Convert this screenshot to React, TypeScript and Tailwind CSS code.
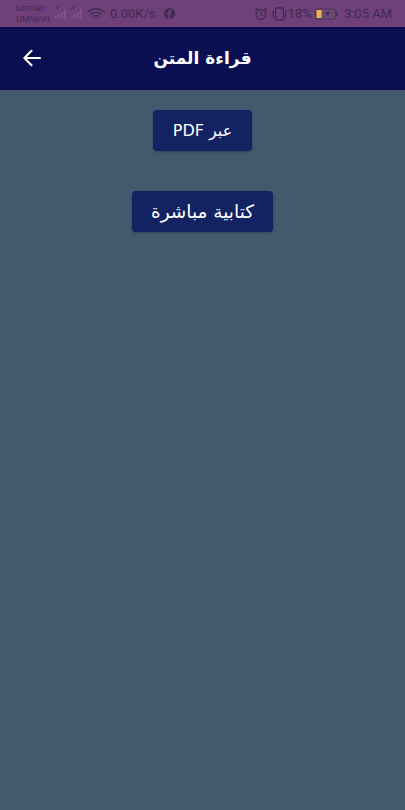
import React from "react";

function Wifi() {
  return (
    <svg width="18" height="14" viewBox="0 0 18 14" fill="none" stroke="#3f2b52" strokeWidth="1.4" strokeLinecap="round">
      <path d="M1 4.500C5.500 .8 12.500 .8 17 4.500" />
      <path d="M3.500 7.200C6.500 4.800 11.500 4.800 14.500 7.200" />
      <path d="M6 9.800C7.800 8.500 10.200 8.500 12 9.800" />
      <circle cx="9" cy="12" r="1" fill="#3f2b52" stroke="none" />
    </svg>
  );
}

function Signal() {
  return (
    <svg width="13" height="10" viewBox="0 0 13 10" fill="#7b5486">
      <rect x="0" y="7" width="2" height="3" />
      <rect x="3" y="5" width="2" height="5" />
      <rect x="6" y="3" width="2" height="7" />
      <rect x="9" y="0" width="2" height="10" />
    </svg>
  );
}

function Alarm() {
  return (
    <svg width="14" height="14" viewBox="0 0 14 14" fill="none" stroke="#3f2b52" strokeWidth="1.3" strokeLinecap="round">
      <circle cx="7" cy="7.500" r="4.800" />
      <path d="M7 5v2.700l1.800 1M1.200 3.400 3.400 1.400M12.800 3.400l-2.200-2" />
    </svg>
  );
}

function Vibrate() {
  return (
    <svg width="17" height="14" viewBox="0 0 17 14" fill="none" stroke="#3f2b52" strokeWidth="1.3" strokeLinecap="round">
      <rect x="4.500" y="1" width="8" height="12" rx="1" />
      <path d="M2.200 4v6M14.800 4v6" />
    </svg>
  );
}

function Battery() {
  return (
    <svg width="24" height="12" viewBox="0 0 24 12">
      <rect x=".5" y="1" width="20" height="10" rx="1.500" fill="#6a4a70" stroke="#4a3358" />
      <rect x="1.500" y="2" width="5" height="8" fill="#f0b24a" />
      <rect x="21" y="4" width="2" height="4" fill="#4a3358" />
      <path d="M10 4h5l-2.500 4z" fill="#3f2b52" />
    </svg>
  );
}

function Facebook() {
  return (
    <svg width="11" height="11" viewBox="0 0 11 11">
      <circle cx="5.500" cy="5.500" r="5.500" fill="#3f2b52" />
      <path d="M6 11V6.500h1.500l.2-1.700H6V3.900c0-.5.2-.8.8-.8h.9V1.600C7.400 1.500 7 1.500 6.500 1.500 5.200 1.500 4.400 2.300 4.400 3.700v1.100H3v1.700h1.400V11z" fill="#6f4079" />
    </svg>
  );
}

function Back() {
  return (
    <svg width="18" height="18" viewBox="0 0 20 20" fill="none" stroke="white" strokeWidth="2.300" strokeLinecap="round" strokeLinejoin="round">
      <path d="M19 10H2M9.500 2 1.500 10l8 8" />
    </svg>
  );
}

export default function App() {
  return (
    <div className="flex h-[810px] w-[405px] flex-col overflow-hidden bg-[#435a6e] font-['DejaVu_Sans','Noto_Sans',sans-serif]">
      <div className="flex h-[27px] shrink-0 items-center justify-between bg-[#6f4079] pl-4 pr-[13px] text-[#3f2b52]">
        <div className="flex items-center">
          <div className="relative flex w-[71px] flex-col font-['Liberation_Sans',sans-serif] text-[8.500px] leading-[11px]">
            <span>Umniah</span>
            <span>UMNIAH</span>
            <span className="absolute left-[38px] top-[1px] text-[8px] leading-none">×</span>
            <span className="absolute left-[54px] top-[1px] text-[8px] leading-none">×</span>
            <span className="absolute left-[39px] top-[6px]"><Signal /></span>
            <span className="absolute left-[55px] top-[6px]"><Signal /></span>
          </div>
          <Wifi />
          <span className="ml-[5px] font-['Roboto',sans-serif] text-[13px]">0.00K/s</span>
          <span className="ml-2"><Facebook /></span>
        </div>
        <div className="flex items-center font-['Roboto',sans-serif] text-[13px]">
          <Alarm />
          <span className="ml-[3px]"><Vibrate /></span>
          <span>18%</span>
          <span className="ml-[3px]"><Battery /></span>
          <span className="ml-[5px]">3:05 AM</span>
        </div>
      </div>

      <header className="relative flex h-[63px] shrink-0 items-center justify-center bg-[#0a0f52]">
        <span className="absolute left-[23px] top-[22px]"><Back /></span>
        <h1 dir="rtl" className="text-[17px] font-bold text-white">قراءة المتن</h1>
      </header>

      <main className="flex flex-col items-center gap-[40px] pt-5">
        <button dir="rtl" className="flex h-[41px] w-[99px] items-center justify-center rounded-[4px] bg-[#122262] text-[16px] text-white shadow-[0_1px_3px_rgba(0,0,0,0.25)]">
          عبر PDF
        </button>
        <button dir="rtl" className="flex h-[41px] w-[141px] items-center justify-center rounded-[4px] bg-[#122262] text-[18.500px] text-white shadow-[0_1px_3px_rgba(0,0,0,0.25)]">
          كتابية مباشرة
        </button>
      </main>
    </div>
  );
}
